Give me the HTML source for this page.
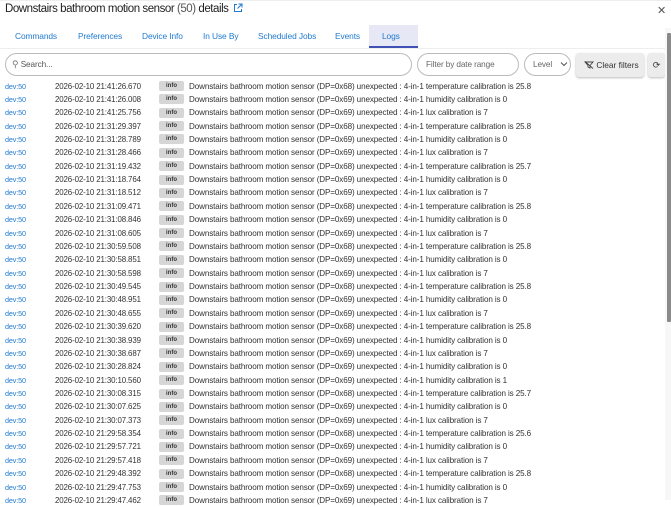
<!DOCTYPE html>
<html><head><meta charset="utf-8"><style>
*{margin:0;padding:0;box-sizing:border-box}
body{width:671px;height:500px;overflow:hidden;background:#fff;font-family:"Liberation Sans",Arial,sans-serif;position:relative;color:#222}
.a{position:absolute;white-space:nowrap}
.title{left:5px;top:3px;font-size:11.5px;color:#222;letter-spacing:-0.45px}
.title .n{color:#555}
.tab{top:31px;font-size:8.4px;color:#1f7ad1;letter-spacing:-0.1px}
.pill{position:absolute;border:1px solid #bbb;border-radius:12px;height:23px;top:53px;font-size:8.2px;color:#666;padding-left:8px;line-height:21px;letter-spacing:-0.1px}
.row{position:absolute;left:0;width:665px;height:13px;font-size:8.1px;line-height:13px;letter-spacing:-0.12px}
.row .d{position:absolute;left:5px;color:#1f7ad1;font-size:7.2px}
.row .t{position:absolute;left:55px;color:#333;font-size:7.9px}
.row .b{position:absolute;left:159px;top:1.5px;width:25px;height:10px;background:#d6d6d6;border-radius:2px;font-size:6px;line-height:10px;text-align:center;font-weight:bold;color:#333;letter-spacing:0}
.row .m{position:absolute;left:189px;color:#333}
</style></head><body>
<div class="a" style="left:0;top:0;width:671px;height:1px;background:#eee"></div>
<div class="a title">Downstairs bathroom motion sensor <span class="n">(50)</span> details <svg width="10" height="10" viewBox="0 0 10 10" style="vertical-align:-1px;margin-left:2px"><path d="M4 1.5H1.5v7h7V6M5.5 1H9v3.5M9 1L4.5 5.5" fill="none" stroke="#1f7ad1" stroke-width="1"/></svg></div>
<div class="a" style="left:657px;top:4px;font-size:11px;color:#555">✕</div>
<div class="a" style="left:369px;top:25px;width:49px;height:22px;background:#e6e9f5"></div>
<div class="a" style="left:369px;top:46px;width:49px;height:2px;background:#3f51b5"></div>
<div class="a" style="left:0;top:48px;width:665px;height:1px;background:#eee"></div>
<div class="a tab" style="left:15px">Commands</div>
<div class="a tab" style="left:78px">Preferences</div>
<div class="a tab" style="left:142px">Device Info</div>
<div class="a tab" style="left:203px">In Use By</div>
<div class="a tab" style="left:258px">Scheduled Jobs</div>
<div class="a tab" style="left:335px">Events</div>
<div class="a tab" style="left:382px">Logs</div>
<div class="pill" style="left:5px;width:407px;padding-left:6px"><span style="font-size:9px;color:#777">&#9906;</span> <span style="color:#555">Search...</span></div>
<div class="pill" style="left:417px;width:102px">Filter by date range</div>
<div class="pill" style="left:524px;width:47px">Level <svg width="8" height="6" viewBox="0 0 8 6" style="margin-left:6px"><path d="M1 1.5l3 3 3-3" fill="none" stroke="#555" stroke-width="1"/></svg></div>
<div class="a" style="left:576px;top:53px;width:68px;height:24px;background:#ececec;border-radius:3px;box-shadow:0 1px 2px #bbb;font-size:8.4px;line-height:24px;padding-left:8px;color:#333"><svg width="10" height="8" viewBox="0 0 10 8" style="vertical-align:-1px"><path d="M1 1h8L6 4.5V7L4 6V4.5zM1 0.5L9 7.5" fill="none" stroke="#444" stroke-width="0.9"/></svg> Clear filters</div>
<div class="a" style="left:648px;top:53px;width:17px;height:24px;background:#ececec;border-radius:3px;box-shadow:0 1px 2px #bbb;font-size:9px;line-height:24px;text-align:center;color:#333">⟳</div>
<div class="a" style="left:665px;top:28px;width:6px;height:472px;background:#f7f7f7"></div>
<div class="a" style="left:667px;top:33px;width:4px;height:289px;background:#8a8a8a;border-radius:1px"></div>
<div id="rows"></div>
<script>
var d=[["21:41:26.670",8,"temperature calibration is 25.8"],["21:41:26.008",9,"humidity calibration is 0"],["21:41:25.756",9,"lux calibration is 7"],
["21:31:29.397",8,"temperature calibration is 25.8"],["21:31:28.789",9,"humidity calibration is 0"],["21:31:28.466",9,"lux calibration is 7"],
["21:31:19.432",8,"temperature calibration is 25.7"],["21:31:18.764",9,"humidity calibration is 0"],["21:31:18.512",9,"lux calibration is 7"],
["21:31:09.471",8,"temperature calibration is 25.8"],["21:31:08.846",9,"humidity calibration is 0"],["21:31:08.605",9,"lux calibration is 7"],
["21:30:59.508",8,"temperature calibration is 25.8"],["21:30:58.851",9,"humidity calibration is 0"],["21:30:58.598",9,"lux calibration is 7"],
["21:30:49.545",8,"temperature calibration is 25.8"],["21:30:48.951",9,"humidity calibration is 0"],["21:30:48.655",9,"lux calibration is 7"],
["21:30:39.620",8,"temperature calibration is 25.8"],["21:30:38.939",9,"humidity calibration is 0"],["21:30:38.687",9,"lux calibration is 7"],
["21:30:28.824",9,"humidity calibration is 0"],["21:30:10.560",9,"humidity calibration is 1"],["21:30:08.315",8,"temperature calibration is 25.7"],
["21:30:07.625",9,"humidity calibration is 0"],["21:30:07.373",9,"lux calibration is 7"],["21:29:58.354",8,"temperature calibration is 25.6"],
["21:29:57.721",9,"humidity calibration is 0"],["21:29:57.418",9,"lux calibration is 7"],["21:29:48.392",8,"temperature calibration is 25.8"],
["21:29:47.753",9,"humidity calibration is 0"],["21:29:47.462",9,"lux calibration is 7"]];
var h="";for(var i=0;i<d.length;i++){var r=d[i];h+='<div class="row" style="top:'+(79.5+i*13.37).toFixed(2)+'px"><span class="d">dev:50</span><span class="t">2026-02-10 '+r[0]+'</span><span class="b">info</span><span class="m">Downstairs bathroom motion sensor (DP=0x6'+r[1]+') unexpected : 4-in-1 '+r[2]+'</span></div>';}
document.getElementById("rows").innerHTML=h;
</script>
</body></html>
